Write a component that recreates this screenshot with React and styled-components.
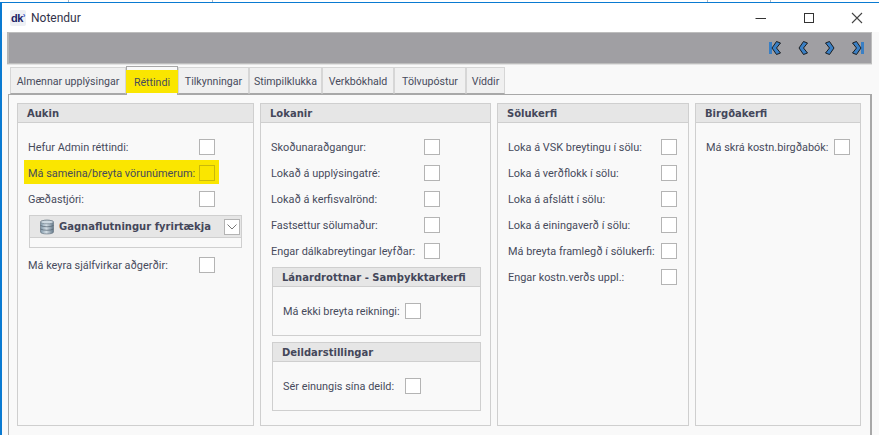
import React from "react";
import styled, { createGlobalStyle } from "styled-components";

const FONT = `Roboto, "Noto Sans", sans-serif`;
const BOLD_FONT = `"DejaVu Sans", sans-serif`;
const YELLOW = "#fae600";

const lockRows = [
  "Skoðunaraðgangur:",
  "Lokað á upplýsingatré:",
  "Lokað á kerfisvalrönd:",
  "Fastsettur sölumaður:",
  "Engar dálkabreytingar leyfðar:",
];
const posRows = [
  "Loka á VSK breytingu í sölu:",
  "Loka á verðflokk í sölu:",
  "Loka á afslátt í sölu:",
  "Loka á einingaverð í sölu:",
  "Má breyta framlegð í sölukerfi:",
  "Engar kostn.verðs uppl.:",
];
const tabs = [
  ["Almennar upplýsingar", 116],
  ["Réttindi", 52],
  ["Tilkynningar", 71],
  ["Stimpilklukka", 73],
  ["Verkbókhald", 72],
  ["Tölvupóstur", 72],
  ["Víddir", 39],
];

const CheckRow = ({ label, labelWidth, highlight }) => (
  <Row highlight={highlight}>
    <Label width={labelWidth}>{label}</Label>
    <Check highlight={highlight} />
  </Row>
);

const NavIcon = ({ flip, bar }) => (
  <NavSvg
    flip={flip}
    width={bar ? 12 : 10}
    height="14"
    viewBox={bar ? "0 0 12 14" : "0 0 10 14"}
  >
    {bar && <rect x="0" y="1" width="3" height="12" fill="#3a7fc4" />}
    <path
      d={
        bar
          ? "M7.5 0.5 L3 7 L7.5 13.5 L11.5 12 L7.5 7 L11.5 2 Z"
          : "M5.5 0.5 L1 7 L5.5 13.5 L9.5 12 L5.5 7 L9.5 2 Z"
      }
      fill="#3a7fc4"
      stroke="#111"
      strokeWidth="0.9"
      strokeLinejoin="round"
    />
  </NavSvg>
);

const App = () => (
  <>
    <GlobalStyle />
    <Page>
      <TopStrip>
        <TopCell width={69} />
        <TopCell width={144} />
        <TopCell width={495} />
        <TopCell width={63} />
      </TopStrip>
      <TitleBar>
        <AppLogo>
          dk<LogoArrow>›</LogoArrow>
        </AppLogo>
        <Title>Notendur</Title>
        <WindowButtons>
          <svg width="12" height="12" viewBox="0 0 12 12">
            <path d="M0.5 6.5H11" stroke="#333" strokeWidth="1" />
          </svg>
          <svg width="12" height="12" viewBox="0 0 12 12">
            <rect x="1.5" y="1.5" width="9" height="9" fill="none" stroke="#333" strokeWidth="1" />
          </svg>
          <svg width="12" height="12" viewBox="0 0 12 12">
            <path d="M1 1L11 11M11 1L1 11" stroke="#444" strokeWidth="1.1" />
          </svg>
        </WindowButtons>
      </TitleBar>
      <Frame>
        <Toolbar>
          <NavIcon bar />
          <NavIcon />
          <NavIcon flip />
          <NavIcon flip bar />
        </Toolbar>
        <TabStrip>
          {tabs.map(([name, width]) => (
            <Tab key={name} width={width} active={name === "Réttindi"}>
              <TabText active={name === "Réttindi"}>{name}</TabText>
            </Tab>
          ))}
        </TabStrip>
        <TabBody>
          <Panel width={237}>
            <PanelHead>Aukin</PanelHead>
            <PanelBody>
              <CheckRow label="Hefur Admin réttindi:" labelWidth={171} />
              <CheckRow label="Má sameina/breyta vörunúmerum:" labelWidth={171} highlight />
              <CheckRow label="Gæðastjóri:" labelWidth={171} />
              <Transfer>
                <TransferHead>
                  <svg width="16" height="16" viewBox="0 0 16 16">
                    <defs>
                      <linearGradient id="db" x1="0" x2="1" y1="0" y2="0">
                        <stop offset="0" stopColor="#7f97a8" />
                        <stop offset="0.45" stopColor="#d3dde4" />
                        <stop offset="1" stopColor="#64798a" />
                      </linearGradient>
                    </defs>
                    <path d="M1.5 3C1.5 0.6 14.5 0.6 14.5 3V13C14.5 15.6 1.5 15.6 1.5 13Z" fill="url(#db)" stroke="#6a7884" strokeWidth="0.7" />
                    <ellipse cx="8" cy="3" rx="6.5" ry="1.8" fill="#cdd9e1" stroke="#6a7884" strokeWidth="0.6" />
                    <path d="M1.5 6.5C4 8.2 12 8.2 14.5 6.5M1.5 10C4 11.7 12 11.7 14.5 10" fill="none" stroke="#53626f" strokeWidth="0.7" />
                  </svg>
                  <TransferTitle>Gagnaflutningur fyrirtækja</TransferTitle>
                  <Collapse>
                    <svg width="10" height="6" viewBox="0 0 10 6">
                      <path d="M0.5 0.5L5 5L9.5 0.5" fill="none" stroke="#777" strokeWidth="1" />
                    </svg>
                  </Collapse>
                </TransferHead>
              </Transfer>
              <CheckRow label="Má keyra sjálfvirkar aðgerðir:" labelWidth={171} />
            </PanelBody>
          </Panel>
          <Panel width={231}>
            <PanelHead>Lokanir</PanelHead>
            <PanelBody>
              {lockRows.map((label) => (
                <CheckRow key={label} label={label} labelWidth={153} />
              ))}
              <NestedPanel>
                <PanelHead>Lánardrottnar - Samþykktarkerfi</PanelHead>
                <PanelBody>
                  <CheckRow label="Má ekki breyta reikningi:" labelWidth={122} />
                </PanelBody>
              </NestedPanel>
              <NestedPanel>
                <PanelHead>Deildarstillingar</PanelHead>
                <PanelBody>
                  <CheckRow label="Sér einungis sína deild:" labelWidth={122} />
                </PanelBody>
              </NestedPanel>
            </PanelBody>
          </Panel>
          <Panel width={192}>
            <PanelHead>Sölukerfi</PanelHead>
            <PanelBody>
              {posRows.map((label) => (
                <CheckRow key={label} label={label} labelWidth={153} />
              ))}
            </PanelBody>
          </Panel>
          <Panel width={166}>
            <PanelHead>Birgðakerfi</PanelHead>
            <PanelBody>
              <CheckRow label="Má skrá kostn.birgðabók:" labelWidth={128} />
            </PanelBody>
          </Panel>
        </TabBody>
      </Frame>
    </Page>
  </>
);

export default App;

const GlobalStyle = createGlobalStyle`
  html, body {
    margin: 0;
    padding: 0;
    background: #fff;
    overflow: hidden;
  }
  * {
    box-sizing: border-box;
  }
`;

const Page = styled.div`
  width: 879px;
  height: 435px;
  display: flex;
  flex-direction: column;
  background: #fff;
  font-family: ${FONT};
  color: #474b5c;
  overflow: hidden;
`;
const TopStrip = styled.div`
  display: flex;
  height: 3px;
  flex-shrink: 0;
  border-bottom: 1px solid #0a7ad1;
`;
const TopCell = styled.div`
  width: ${({ width }) => width}px;
  border-right: 1px solid #a9b4bf;
`;
const TitleBar = styled.div`
  display: flex;
  align-items: center;
  height: 29px;
  flex-shrink: 0;
  padding-left: 8px;
  border-left: 2px solid #0a7ad1;
`;
const AppLogo = styled.div`
  display: flex;
  align-items: center;
  justify-content: center;
  width: 16px;
  height: 16px;
  background: #eef0f4;
  border-radius: 2px;
  color: #1c1c66;
  font: bold 11px "Liberation Sans", sans-serif;
  letter-spacing: -0.5px;
`;
const LogoArrow = styled.span`
  color: #3a52c4;
  font-size: 8px;
  margin-bottom: 4px;
`;
const Title = styled.div`
  margin-left: 5px;
  font-size: 12px;
  color: #33334a;
`;
const WindowButtons = styled.div`
  display: flex;
  gap: 36px;
  margin-left: auto;
  margin-right: 16px;
`;
const Frame = styled.div`
  flex: 1;
  min-height: 0;
  display: flex;
  flex-direction: column;
  background: #f9f9f9;
  border-left: 2px solid #0a7ad1;
  padding-left: 5px;
  padding-right: 7px;
`;
const Toolbar = styled.div`
  display: flex;
  align-items: center;
  justify-content: flex-end;
  gap: 17px;
  height: 32px;
  flex-shrink: 0;
  padding-right: 7px;
  background: #a09fa3;
  border: 1px solid #bdbdbd;
  border-left: 2px solid #b5b5b5;
`;
const NavSvg = styled.svg`
  transform: ${({ flip }) => (flip ? "scaleX(-1)" : "none")};
`;
const TabStrip = styled.div`
  display: flex;
  align-items: flex-end;
  height: 30px;
  flex-shrink: 0;
  padding-left: 3px;
  border-top: 1px solid #e2e2e2;
  position: relative;
  z-index: 1;
`;
const Tab = styled.div`
  width: ${({ width }) => width}px;
  height: ${({ active }) => (active ? "29px" : "27px")};
  display: flex;
  flex-direction: column;
  background: ${({ active }) => (active ? "#f9f9f9" : "#f0f0f0")};
  border: 1px solid ${({ active }) => (active ? "#a8a8a8" : "#d6d6d6")};
  border-bottom: ${({ active }) => (active ? "none" : "1px solid #a8a8a8")};
  margin-bottom: ${({ active }) => (active ? "-1px" : "0")};
  padding-top: ${({ active }) => (active ? "3px" : "0")};
`;
const TabText = styled.div`
  height: ${({ active }) => (active ? "23px" : "auto")};
  flex: ${({ active }) => (active ? "none" : "1")};
  display: flex;
  align-items: center;
  justify-content: center;
  background: ${({ active }) => (active ? YELLOW : "transparent")};
  margin: ${({ active }) => (active ? "0 -1px" : "0")};
  padding-top: 1px;
  font-size: 10.6px;
  white-space: nowrap;
`;
const TabBody = styled.div`
  flex: 1;
  min-height: 0;
  display: flex;
  gap: 6px;
  padding: 8px 10px 9px 8px;
  margin-left: 1px;
  border-left: 1px solid #a8a8a8;
  border-right: 2px solid #a8a8a8;
  border-top: 1px solid #a8a8a8;
`;
const Panel = styled.div`
  width: ${({ width }) => width}px;
  flex-shrink: 0;
  background: #f9f9f9;
  border: 1px solid #cfcfcf;
`;
const PanelHead = styled.div`
  height: 19px;
  padding-left: 9px;
  display: flex;
  align-items: center;
  background: #e6e6e6;
  border-bottom: 1px solid #cfcfcf;
  font-size: 10px;
  font-weight: 700;
  font-family: ${BOLD_FONT};
  color: #44475a;
  white-space: nowrap;
`;
const PanelBody = styled.div`
  display: flex;
  flex-direction: column;
  gap: 2px;
  padding: 12px 10px 0;
`;
const Row = styled.div`
  display: flex;
  align-items: center;
  height: 24px;
  width: ${({ highlight }) => (highlight ? "fit-content" : "auto")};
  background: ${({ highlight }) => (highlight ? YELLOW : "transparent")};
  margin: ${({ highlight }) => (highlight ? "-1px 0 1px -4px" : "0")};
  padding: ${({ highlight }) => (highlight ? "2px 4px 0" : "0")};
`;
const Label = styled.div`
  width: ${({ width }) => width}px;
  font-size: 10.9px;
  white-space: nowrap;
  flex-shrink: 0;
`;
const Check = styled.div`
  width: 16px;
  height: 16px;
  flex-shrink: 0;
  background: ${({ highlight }) => (highlight ? YELLOW : "#fff")};
  border: 1px solid ${({ highlight }) => (highlight ? "#c9b90a" : "#b4b4b4")};
`;
const Transfer = styled.div`
  width: 213px;
  height: 33px;
  margin: 2px 0 3px 1px;
  background: #f9f9f9;
  border: 1px solid #cfcfcf;
`;
const TransferHead = styled.div`
  display: flex;
  align-items: center;
  height: 22px;
  padding-left: 9px;
  background: #e6e6e6;
  border-bottom: 1px solid #cfcfcf;
`;
const TransferTitle = styled.div`
  margin-left: 4px;
  font: 700 10px ${BOLD_FONT};
  color: #44475a;
  white-space: nowrap;
`;
const Collapse = styled.div`
  margin-left: auto;
  margin-right: 1px;
  width: 16px;
  height: 16px;
  display: flex;
  align-items: center;
  justify-content: center;
  background: #fff;
  border: 1px solid #b4b4b4;
`;
const NestedPanel = styled.div`
  width: 209px;
  height: 69px;
  margin: 2px 0 2px 1px;
  border: 1px solid #cfcfcf;
  background: #f9f9f9;
`;
